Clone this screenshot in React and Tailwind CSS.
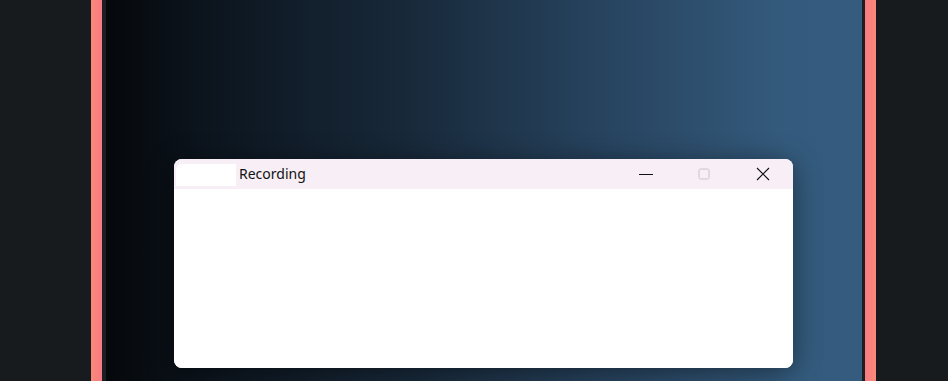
export default function App() {
  return (
    <div className="flex h-[381px] w-[948px] overflow-hidden bg-[#181b1e]" style={{ fontFamily: '"Noto Sans", "Liberation Sans", sans-serif' }}>
      <div className="w-[91px] shrink-0" />
      <div className="w-[11px] shrink-0 bg-[linear-gradient(90deg,#f98a78,#f87a82)]" />
      <div className="w-[4px] shrink-0 bg-[#1c1f22]" />
      <div className="relative flex-1 bg-[linear-gradient(90deg,#05080b_0%,#0d1620_15%,#18293a_40%,#25405a_62%,#2e4f6e_78%,#345b7d_90%,#355c7e_100%)] pl-[68px] pt-[159px]">
        <div className="flex h-[209px] w-[619px] flex-col overflow-hidden rounded-[8px] bg-white shadow-[0_4px_28px_rgba(0,0,0,0.45)]">
          <div className="flex h-[30px] shrink-0 items-center bg-[#f7eef6]">
            <div className="ml-[2px] mt-[2px] h-[22px] w-[60px] rounded-tl-[6px] bg-white" />
            <span className="ml-[3px] text-[14px] leading-none text-[#111]">Recording</span>
            <div className="ml-auto flex h-full items-center">
              <div className="flex h-full w-[58px] items-center justify-center">
                <svg width="14" height="14" viewBox="0 0 14 14"><path d="M0 7.5h14" stroke="#111" strokeWidth="1" /></svg>
              </div>
              <div className="flex h-full w-[58px] items-center justify-center">
                <svg width="12" height="12" viewBox="0 0 12 12"><rect x="1" y="1" width="10" height="10" rx="1.5" fill="none" stroke="#c8c4c8" strokeWidth="1" /></svg>
              </div>
              <div className="flex h-full w-[60px] items-center justify-center">
                <svg width="14" height="14" viewBox="0 0 14 14"><path d="M1 1l12 12M13 1L1 13" stroke="#111" strokeWidth="1.1" /></svg>
              </div>
            </div>
          </div>
          <div className="flex-1 bg-white" />
        </div>
      </div>
      <div className="w-[3px] shrink-0 bg-[#1c1f22]" />
      <div className="w-[11px] shrink-0 bg-[linear-gradient(90deg,#f87a82,#f98a78)]" />
      <div className="w-[72px] shrink-0" />
    </div>
  );
}
